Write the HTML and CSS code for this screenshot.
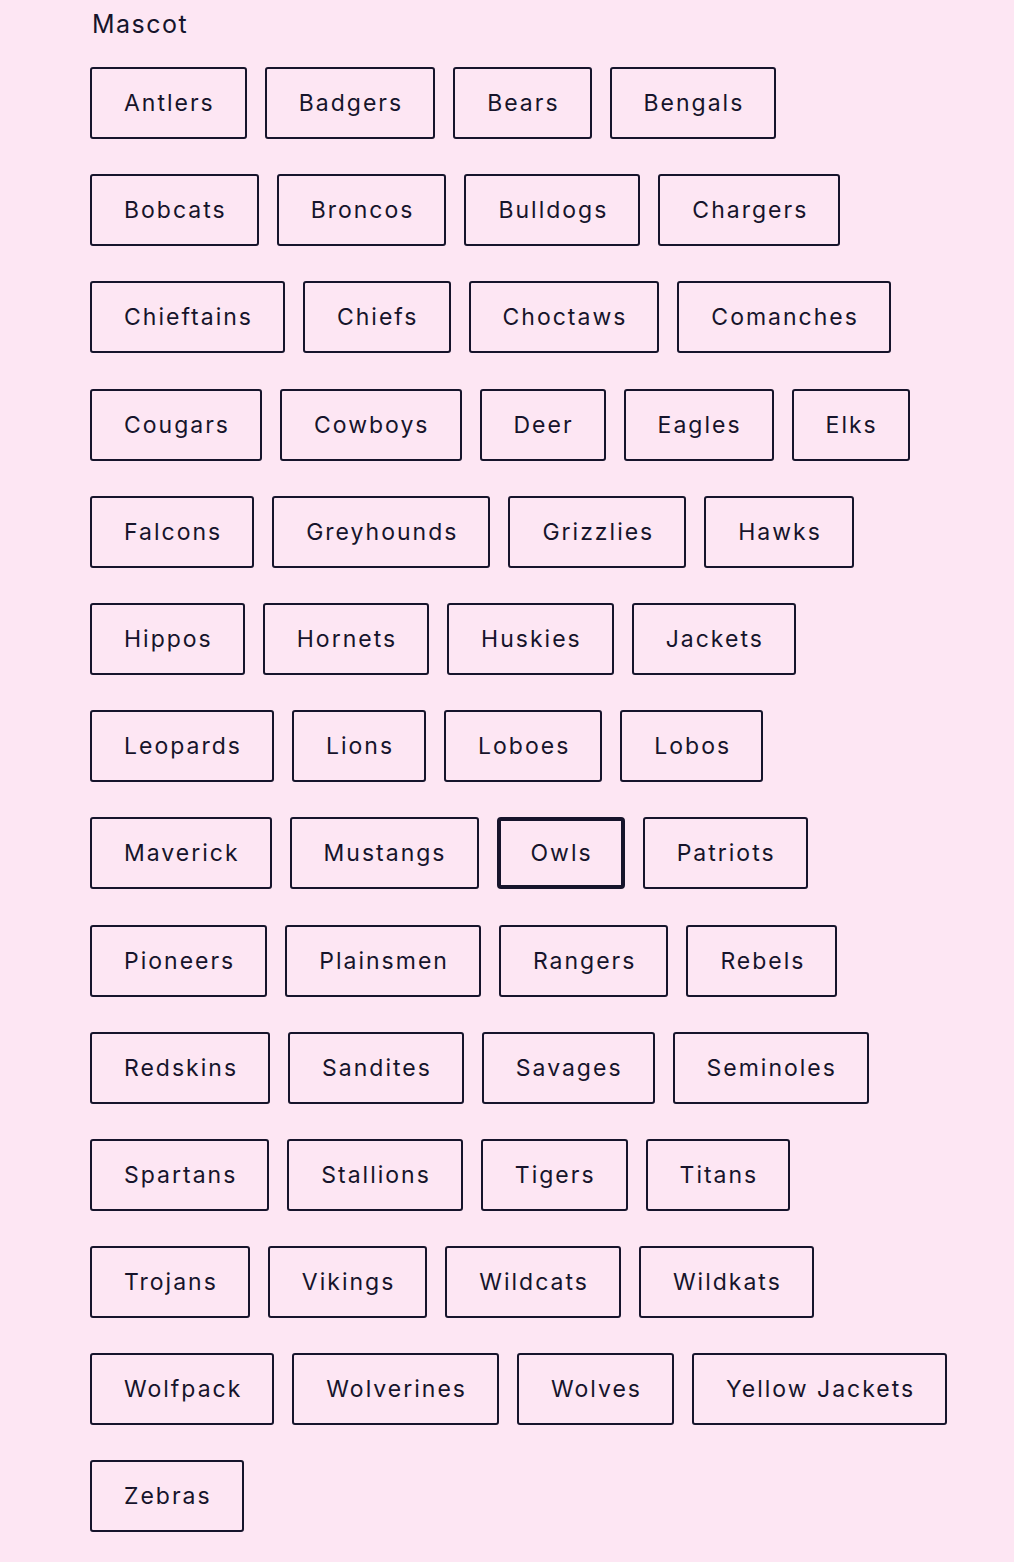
FILE: index.html
```html
<!DOCTYPE html>
<html lang="en">
<head>
    <meta charset="UTF-8">
    <meta name="viewport" content="width=device-width, initial-scale=1.0">
    <title>Mascot</title>
    <link rel="stylesheet" href="styles.css">
</head>
<body>
    <div class="filter">
        <h3 class="filter-title">Mascot</h3>
        <div class="options">
            <button class="option">Antlers</button>
            <button class="option">Badgers</button>
            <button class="option">Bears</button>
            <button class="option">Bengals</button>
            <button class="option">Bobcats</button>
            <button class="option">Broncos</button>
            <button class="option">Bulldogs</button>
            <button class="option">Chargers</button>
            <button class="option">Chieftains</button>
            <button class="option">Chiefs</button>
            <button class="option">Choctaws</button>
            <button class="option">Comanches</button>
            <button class="option">Cougars</button>
            <button class="option">Cowboys</button>
            <button class="option">Deer</button>
            <button class="option">Eagles</button>
            <button class="option">Elks</button>
            <button class="option">Falcons</button>
            <button class="option">Greyhounds</button>
            <button class="option">Grizzlies</button>
            <button class="option">Hawks</button>
            <button class="option">Hippos</button>
            <button class="option">Hornets</button>
            <button class="option">Huskies</button>
            <button class="option">Jackets</button>
            <button class="option">Leopards</button>
            <button class="option">Lions</button>
            <button class="option">Loboes</button>
            <button class="option">Lobos</button>
            <button class="option">Maverick</button>
            <button class="option">Mustangs</button>
            <button class="option selected">Owls</button>
            <button class="option">Patriots</button>
            <button class="option">Pioneers</button>
            <button class="option">Plainsmen</button>
            <button class="option">Rangers</button>
            <button class="option">Rebels</button>
            <button class="option">Redskins</button>
            <button class="option">Sandites</button>
            <button class="option">Savages</button>
            <button class="option">Seminoles</button>
            <button class="option">Spartans</button>
            <button class="option">Stallions</button>
            <button class="option">Tigers</button>
            <button class="option">Titans</button>
            <button class="option">Trojans</button>
            <button class="option">Vikings</button>
            <button class="option">Wildcats</button>
            <button class="option">Wildkats</button>
            <button class="option">Wolfpack</button>
            <button class="option">Wolverines</button>
            <button class="option">Wolves</button>
            <button class="option">Yellow Jackets</button>
            <button class="option">Zebras</button>
        </div>
    </div>
</body>
</html>
```

FILE: styles.css
```css
body {
    font-family: Inter, "Noto Sans", sans-serif;
    background-color: #fde6f3;
    color: #16142b;
    margin: 0;
    padding: 0;
}

.filter {
    padding: 0 64px 0 90px;
}

.filter-title {
    margin: 0;
    padding: 8px 0 0 2px;
    font-size: 25px;
    font-weight: 400;
    line-height: 32px;
    letter-spacing: 1.5px;
}

.options {
    display: flex;
    flex-wrap: wrap;
    gap: 35.2px 18px;
    margin-top: 27px;
}

.option {
    font-family: inherit;
    font-size: 23px;
    letter-spacing: 2px;
    line-height: 28px;
    color: #16142b;
    background: transparent;
    border: 2px solid #16142b;
    border-radius: 3px;
    padding: 20px 30px 20px 32px;
    cursor: pointer;
}

.option.selected {
    border-width: 4px;
    padding: 18px 28px 18px 30px;
    border-radius: 4px;
}
```
